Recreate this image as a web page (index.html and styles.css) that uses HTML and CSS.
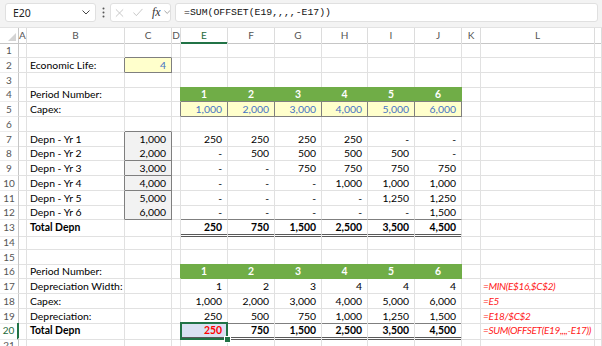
FILE: index.html
```html
<!DOCTYPE html>
<html lang="en">
<head>
    <meta charset="UTF-8">
    <title>Depreciation - OFFSET</title>
    <link rel="stylesheet" href="styles.css">
</head>
<body>
    <div class="fbar">
        <div class="namebox">
            <span>E20</span>
            <svg width="8" height="5" viewBox="0 0 8 5"><path d="M0.5 0.5L4 4L7.5 0.5" fill="none" stroke="#444" stroke-width="1"/></svg>
        </div>
        <div class="dots">
            <svg width="3" height="11" viewBox="0 0 3 11"><circle cx="1.5" cy="1.5" r="1"/><circle cx="1.5" cy="5.5" r="1"/><circle cx="1.5" cy="9.5" r="1"/></svg>
        </div>
        <div class="tools">
            <svg width="10" height="10" viewBox="0 0 10 10"><path d="M1 1L9 9M9 1L1 9" stroke="#c2c2c2" stroke-width="1"/></svg>
            <svg width="11" height="9" viewBox="0 0 11 9"><path d="M0.5 4.5L3.7 8L10.5 0.5" fill="none" stroke="#c2c2c2" stroke-width="1"/></svg>
            <span class="fx">fx</span>
            <svg width="7" height="5" viewBox="0 0 7 5"><path d="M0.5 0.5L3.5 3.5L6.5 0.5" fill="none" stroke="#9a9a9a" stroke-width="1"/></svg>
        </div>
        <div class="formula">=SUM(OFFSET(E19,,,,-E17))</div>
    </div>

    <div class="sheet">
        <div class="hdr">
            <div class="corner"><svg width="8" height="8" viewBox="0 0 8 8"><path d="M8 0V8H0Z" fill="#d4d4d4"/></svg></div>
            <div class="ch">A</div><div class="ch">B</div><div class="ch">C</div><div class="ch">D</div>
            <div class="ch on">E</div><div class="ch">F</div><div class="ch">G</div><div class="ch">H</div>
            <div class="ch">I</div><div class="ch">J</div><div class="ch">K</div><div class="ch">L</div><div class="ch"></div>
        </div>

        <div class="row">
            <div class="rh">1</div><div class="c"></div><div class="c"></div><div class="c bb"></div><div class="c"></div>
            <div class="c"></div><div class="c"></div><div class="c"></div><div class="c"></div><div class="c"></div><div class="c"></div>
            <div class="c"></div><div class="c"></div><div class="c"></div>
        </div>
        <div class="row">
            <div class="rh">2</div><div class="c"></div><div class="c br">Economic Life:</div><div class="c yel n">4</div><div class="c"></div>
            <div class="c"></div><div class="c"></div><div class="c"></div><div class="c"></div><div class="c"></div><div class="c"></div>
            <div class="c"></div><div class="c"></div><div class="c"></div>
        </div>
        <div class="row">
            <div class="rh">3</div><div class="c"></div><div class="c"></div><div class="c"></div><div class="c"></div>
            <div class="c gb"></div><div class="c gb"></div><div class="c gb"></div><div class="c gb"></div><div class="c gb"></div><div class="c gb"></div>
            <div class="c"></div><div class="c"></div><div class="c"></div>
        </div>
        <div class="row">
            <div class="rh">4</div><div class="c"></div><div class="c">Period Number:</div><div class="c"></div><div class="c gr"></div>
            <div class="c grn bb">1</div><div class="c grn bb">2</div><div class="c grn bb">3</div><div class="c grn bb">4</div><div class="c grn bb">5</div><div class="c grn bb">6</div>
            <div class="c"></div><div class="c"></div><div class="c"></div>
        </div>
        <div class="row">
            <div class="rh">5</div><div class="c"></div><div class="c">Capex:</div><div class="c"></div><div class="c br"></div>
            <div class="c yel n">1,000</div><div class="c yel n">2,000</div><div class="c yel n">3,000</div><div class="c yel n">4,000</div><div class="c yel n">5,000</div><div class="c yel n">6,000</div>
            <div class="c"></div><div class="c"></div><div class="c"></div>
        </div>
        <div class="row">
            <div class="rh">6</div><div class="c"></div><div class="c"></div><div class="c bb"></div><div class="c"></div>
            <div class="c"></div><div class="c"></div><div class="c"></div><div class="c"></div><div class="c"></div><div class="c"></div>
            <div class="c"></div><div class="c"></div><div class="c"></div>
        </div>
        <div class="row">
            <div class="rh">7</div><div class="c"></div><div class="c br">Depn - Yr 1</div><div class="c box n">1,000</div><div class="c"></div>
            <div class="c n">250</div><div class="c n">250</div><div class="c n">250</div><div class="c n">250</div><div class="c n">-</div><div class="c n">-</div>
            <div class="c"></div><div class="c"></div><div class="c"></div>
        </div>
        <div class="row">
            <div class="rh">8</div><div class="c"></div><div class="c br">Depn - Yr 2</div><div class="c box n">2,000</div><div class="c"></div>
            <div class="c n">-</div><div class="c n">500</div><div class="c n">500</div><div class="c n">500</div><div class="c n">500</div><div class="c n">-</div>
            <div class="c"></div><div class="c"></div><div class="c"></div>
        </div>
        <div class="row">
            <div class="rh">9</div><div class="c"></div><div class="c br">Depn - Yr 3</div><div class="c box n">3,000</div><div class="c"></div>
            <div class="c n">-</div><div class="c n">-</div><div class="c n">750</div><div class="c n">750</div><div class="c n">750</div><div class="c n">750</div>
            <div class="c"></div><div class="c"></div><div class="c"></div>
        </div>
        <div class="row">
            <div class="rh">10</div><div class="c"></div><div class="c br">Depn - Yr 4</div><div class="c box n">4,000</div><div class="c"></div>
            <div class="c n">-</div><div class="c n">-</div><div class="c n">-</div><div class="c n">1,000</div><div class="c n">1,000</div><div class="c n">1,000</div>
            <div class="c"></div><div class="c"></div><div class="c"></div>
        </div>
        <div class="row">
            <div class="rh">11</div><div class="c"></div><div class="c br">Depn - Yr 5</div><div class="c box n">5,000</div><div class="c"></div>
            <div class="c n">-</div><div class="c n">-</div><div class="c n">-</div><div class="c n">-</div><div class="c n">1,250</div><div class="c n">1,250</div>
            <div class="c"></div><div class="c"></div><div class="c"></div>
        </div>
        <div class="row">
            <div class="rh">12</div><div class="c"></div><div class="c br">Depn - Yr 6</div><div class="c box n">6,000</div><div class="c"></div>
            <div class="c n bb">-</div><div class="c n bb">-</div><div class="c n bb">-</div><div class="c n bb">-</div><div class="c n bb">-</div><div class="c n bb">1,500</div>
            <div class="c"></div><div class="c"></div><div class="c"></div>
        </div>
        <div class="row">
            <div class="rh">13</div><div class="c"></div><div class="c b">Total Depn</div><div class="c"></div><div class="c"></div>
            <div class="c n b dbl">250</div><div class="c n b dbl">750</div><div class="c n b dbl">1,500</div><div class="c n b dbl">2,500</div><div class="c n b dbl">3,500</div><div class="c n b dbl">4,500</div>
            <div class="c"></div><div class="c"></div><div class="c"></div>
        </div>
        <div class="row">
            <div class="rh">14</div><div class="c"></div><div class="c"></div><div class="c"></div><div class="c"></div>
            <div class="c"></div><div class="c"></div><div class="c"></div><div class="c"></div><div class="c"></div><div class="c"></div>
            <div class="c"></div><div class="c"></div><div class="c"></div>
        </div>
        <div class="row">
            <div class="rh">15</div><div class="c"></div><div class="c"></div><div class="c"></div><div class="c"></div>
            <div class="c gb"></div><div class="c gb"></div><div class="c gb"></div><div class="c gb"></div><div class="c gb"></div><div class="c gb"></div>
            <div class="c"></div><div class="c"></div><div class="c"></div>
        </div>
        <div class="row">
            <div class="rh">16</div><div class="c"></div><div class="c">Period Number:</div><div class="c"></div><div class="c gr"></div>
            <div class="c grn">1</div><div class="c grn">2</div><div class="c grn">3</div><div class="c grn">4</div><div class="c grn">5</div><div class="c grn">6</div>
            <div class="c"></div><div class="c"></div><div class="c"></div>
        </div>
        <div class="row">
            <div class="rh">17</div><div class="c"></div><div class="c">Depreciation Width:</div><div class="c"></div><div class="c"></div>
            <div class="c n">1</div><div class="c n">2</div><div class="c n">3</div><div class="c n">4</div><div class="c n">4</div><div class="c n">4</div>
            <div class="c"></div><div class="c fml">=MIN(E$16,$C$2)</div><div class="c"></div>
        </div>
        <div class="row">
            <div class="rh">18</div><div class="c"></div><div class="c">Capex:</div><div class="c"></div><div class="c"></div>
            <div class="c n">1,000</div><div class="c n">2,000</div><div class="c n">3,000</div><div class="c n">4,000</div><div class="c n">5,000</div><div class="c n">6,000</div>
            <div class="c"></div><div class="c fml">=E5</div><div class="c"></div>
        </div>
        <div class="row">
            <div class="rh">19</div><div class="c"></div><div class="c">Depreciation:</div><div class="c"></div><div class="c"></div>
            <div class="c n bb">250</div><div class="c n bb">500</div><div class="c n bb">750</div><div class="c n bb">1,000</div><div class="c n bb">1,250</div><div class="c n bb">1,500</div>
            <div class="c"></div><div class="c fml">=E18/$C$2</div><div class="c"></div>
        </div>
        <div class="row">
            <div class="rh on">20</div><div class="c"></div><div class="c b">Total Depn</div><div class="c"></div><div class="c"></div>
            <div class="c n b dbl red cur">250</div><div class="c n b dbl">750</div><div class="c n b dbl">1,500</div><div class="c n b dbl">2,500</div><div class="c n b dbl">3,500</div><div class="c n b dbl">4,500</div>
            <div class="c"></div><div class="c fml">=SUM(OFFSET(E19,,,,-E17))</div><div class="c"></div>
        </div>
        <div class="row">
            <div class="rh">21</div><div class="c"></div><div class="c"></div><div class="c"></div><div class="c"></div>
            <div class="c"></div><div class="c"></div><div class="c"></div><div class="c"></div><div class="c"></div><div class="c"></div>
            <div class="c"></div><div class="c"></div><div class="c"></div>
        </div>
    </div>
</body>
</html>
```

FILE: styles.css
```css
body {
    margin: 0;
    width: 602px;
    height: 346px;
    overflow: hidden;
    background: #fff;
    font-family: Lato, "Liberation Sans", sans-serif;
    font-size: 10.4px;
    color: #000;
}

/* formula bar */
.fbar {
    display: flex;
    align-items: center;
    height: 28px;
    padding: 0 4px 2px 5px;
    box-sizing: border-box;
    background: #f3f3f3;
    border-bottom: 1px solid #e2e2e2;
}

.namebox {
    display: flex;
    align-items: center;
    justify-content: space-between;
    width: 91px;
    height: 19px;
    padding: 0 5px 0 7px;
    box-sizing: border-box;
    background: #fff;
    border: 1px solid #e0e0e0;
    border-radius: 3px;
    font-family: "Noto Sans", sans-serif;
    font-size: 10.5px;
    color: #222;
}

.dots {
    width: 14px;
    display: flex;
    justify-content: center;
    fill: #555;
}

.tools {
    display: flex;
    align-items: center;
    gap: 9px;
    width: 61px;
    height: 19px;
    padding-left: 4px;
    box-sizing: border-box;
    background: #fff;
    border: 1px solid #e0e0e0;
    border-radius: 3px;
}

.fx {
    margin-right: -6px;
    font-family: "Liberation Serif", serif;
    font-style: italic;
    font-size: 12px;
    color: #333;
}

.formula {
    flex: 1;
    height: 19px;
    margin-left: 4px;
    padding-left: 8px;
    box-sizing: border-box;
    background: #fff;
    border: 1px solid #e0e0e0;
    border-radius: 3px;
    font-family: "Liberation Mono", monospace;
    font-size: 9.8px;
    line-height: 17px;
    color: #111;
}

/* grid */
.hdr,
.row {
    display: grid;
    grid-template-columns: 19px 8px 98px 47px 9px 47px 47px 47px 46px 47px 47px 19px 114px 1fr;
}

.hdr {
    height: 15px;
}

.row {
    height: 14.75px;
}

.corner {
    display: flex;
    align-items: flex-end;
    justify-content: flex-end;
    padding: 0 2px 2px 0;
    border-right: 1px solid #c6c6c6;
    border-bottom: 1px solid #c6c6c6;
}

.ch {
    border-right: 1px solid #dcdcdc;
    border-bottom: 1px solid #c6c6c6;
    text-align: center;
    line-height: 14px;
    font-size: 10px;
    color: #555;
}

.ch.on {
    color: #1e6b3c;
    border-bottom: 2px solid #217346;
}

.rh {
    box-sizing: border-box;
    border-right: 1px solid #c6c6c6;
    border-bottom: 1px solid #ececec;
    text-align: center;
    line-height: 14px;
    font-size: 10px;
    color: #555;
}

.rh.on {
    color: #1e6b3c;
    border-right: 2px solid #217346;
}

.c {
    box-sizing: border-box;
    padding: 0 3px;
    border-right: 1px solid #e1e1e1;
    border-bottom: 1px solid #e1e1e1;
    line-height: 14px;
    white-space: nowrap;
}

.n {
    text-align: right;
    padding-right: 5px;
}

.b {
    font-weight: bold;
}

.grn {
    background: #70ad47;
    color: #fff;
    font-weight: bold;
    text-align: center;
    border-right-color: #70ad47;
    border-bottom-color: #70ad47;
}

.gr {
    border-right-color: #70ad47;
}

.gb {
    border-bottom-color: #70ad47;
}

.yel {
    background: #ffffcc;
    color: #4472c4;
    border-right-color: #7f7f7f;
    border-bottom-color: #7f7f7f;
}

.box {
    background: #f2f2f2;
    border-right-color: #7f7f7f;
    border-bottom-color: #7f7f7f;
}

.br {
    border-right-color: #7f7f7f;
}

.bb {
    border-bottom-color: #7f7f7f;
}

.dbl {
    border-bottom: 3px double #595959;
}

.red {
    color: #ff0000;
}

.fml {
    padding-left: 2px;
    color: #ff2020;
    font-style: italic;
    font-size: 10px;
    letter-spacing: -0.35px;
}

/* active cell */
.cur {
    position: relative;
    background: #d9e1f2;
}

.cur::after {
    content: "";
    position: absolute;
    top: -1px;
    left: -1px;
    right: -1px;
    bottom: -3px;
    border: 2px solid #217346;
}

.cur::before {
    content: "";
    position: absolute;
    right: -4px;
    bottom: -6px;
    width: 5px;
    height: 5px;
    background: #217346;
    border: 1px solid #fff;
    z-index: 1;
}
```
